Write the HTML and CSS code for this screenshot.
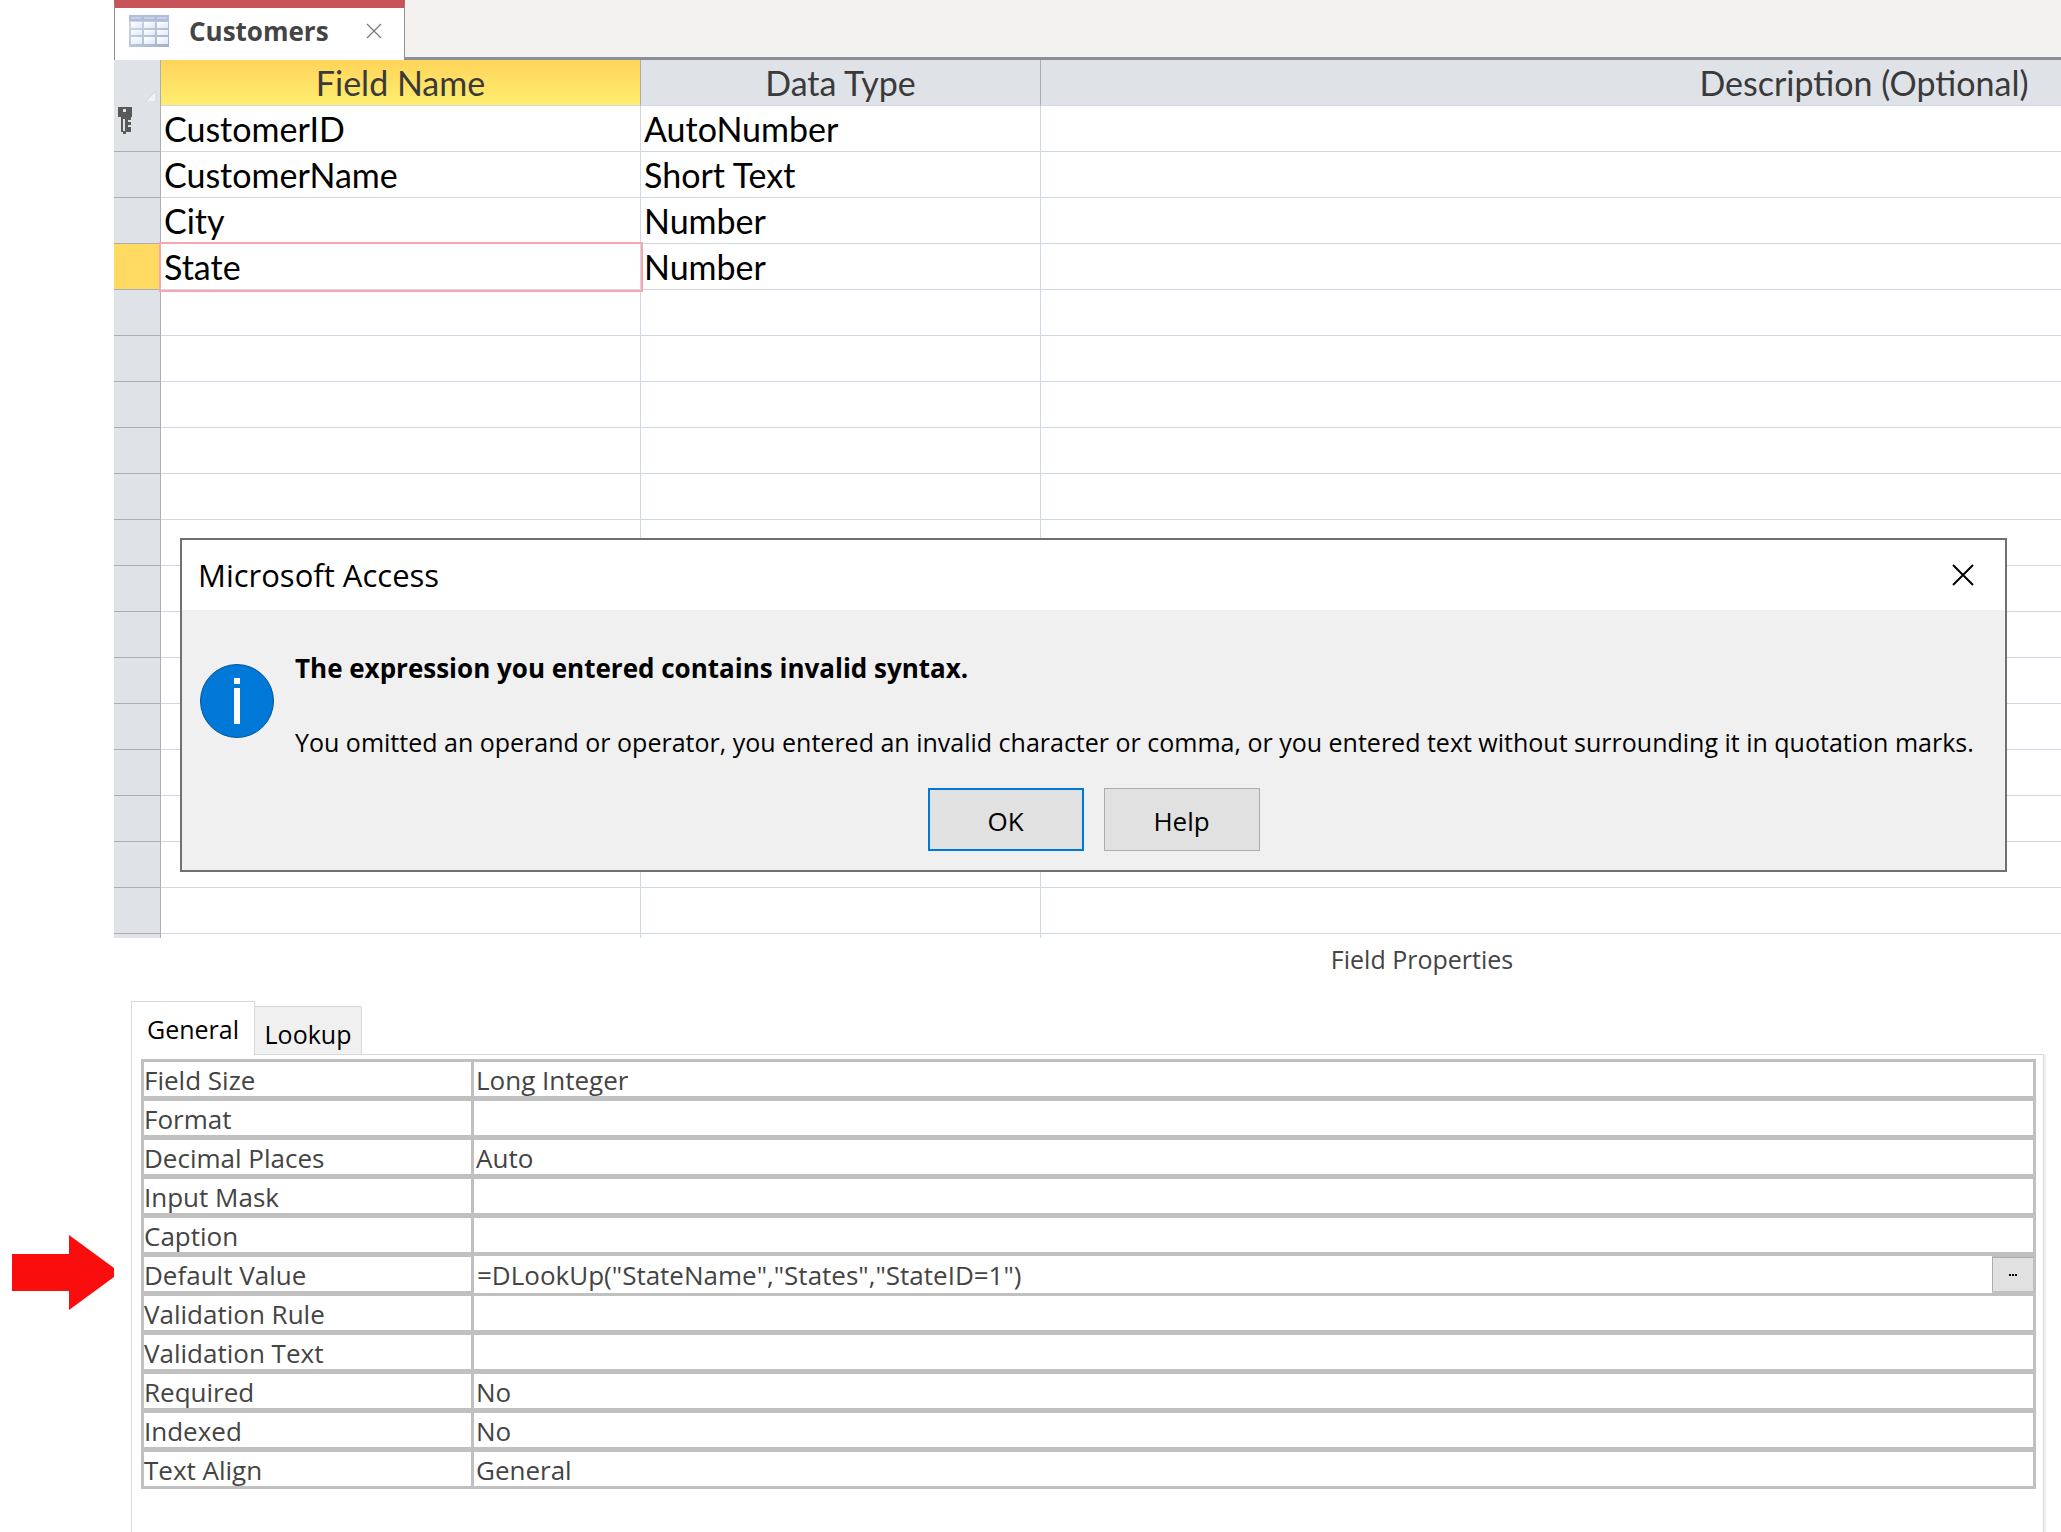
FILE: index.html
```html
<!DOCTYPE html>
<html lang="en">
<head>
<meta charset="utf-8">
<title>Customers</title>
<link rel="stylesheet" href="styles.css">
</head>
<body>
<div class="app">
  <header class="doc-tabs">
    <div class="doc-tab">
      <svg class="table-icon" width="40" height="32" viewBox="0 0 40 32" aria-hidden="true">
        <defs>
          <linearGradient id="sheet" x1="0" y1="0" x2="1" y2="1">
            <stop offset="0" stop-color="#d3dbec"/>
            <stop offset="1" stop-color="#a3b0c8"/>
          </linearGradient>
          <linearGradient id="cell" x1="0" y1="0" x2="1" y2="1">
            <stop offset="0" stop-color="#ffffff"/>
            <stop offset="1" stop-color="#dfe9fa"/>
          </linearGradient>
        </defs>
        <rect width="40" height="32" fill="url(#sheet)"/>
        <rect width="40" height="6" fill="#afbddb"/>
        <g fill="#c6d1e8"><rect x="2" y="2" width="10" height="2"/><rect x="15" y="2" width="10" height="2"/><rect x="28" y="2" width="10" height="2"/></g>
        <g fill="url(#cell)">
          <rect x="2" y="7" width="11" height="6"/><rect x="15" y="7" width="11" height="6"/><rect x="28" y="7" width="11" height="6"/>
          <rect x="2" y="15" width="11" height="5"/><rect x="15" y="15" width="11" height="5"/><rect x="28" y="15" width="11" height="5"/>
          <rect x="2" y="22" width="11" height="7"/><rect x="15" y="22" width="11" height="7"/><rect x="28" y="22" width="11" height="7"/>
        </g>
      </svg>
      <span class="doc-name">Customers</span>
      <button class="tab-close" aria-label="Close Customers">
        <svg width="16" height="16" viewBox="0 0 16 16"><path d="M1 1L15 15M15 1L1 15" stroke="#777" stroke-width="1.2"/></svg>
      </button>
    </div>
  </header>

  <main class="designer">
    <section class="grid-area">
      <table class="field-grid">
        <colgroup><col class="col-selector"><col class="col-name"><col class="col-type"><col></colgroup>
        <thead>
          <tr>
            <td class="selector corner" rowspan="2">
              <div class="corner-icons">
                <svg class="select-all" width="12" height="11" viewBox="0 0 12 11" aria-hidden="true"><path d="M0 11L11 0V11Z" fill="#eef1f6" stroke="#cdd5e0" stroke-width="1"/></svg>
                <svg class="key-icon" width="14" height="28" viewBox="0 0 14 28" aria-label="Primary key" role="img"><path fill="#595959" fill-rule="evenodd" d="M0 0H14V10H13V13H10V15H13V18H10V20H13V25H8V27H5V25H3V10H0ZM5 2V5H8V2ZM5 12V24H7V12Z"/></svg>
              </div>
            </td>
            <th class="current" scope="col">Field Name</th><th scope="col">Data Type</th><th scope="col">Description (Optional)</th>
          </tr>
          <tr class="field-row"><td>CustomerID</td><td>AutoNumber</td><td></td></tr>
        </thead>
        <tbody>
          <tr><td class="selector"></td><td>CustomerName</td><td>Short Text</td><td></td></tr>
          <tr><td class="selector"></td><td>City</td><td>Number</td><td></td></tr>
          <tr><td class="selector active"></td><td class="focused">State</td><td>Number</td><td></td></tr>
          <tr><td class="selector"></td><td></td><td></td><td></td></tr>
          <tr><td class="selector"></td><td></td><td></td><td></td></tr>
          <tr><td class="selector"></td><td></td><td></td><td></td></tr>
          <tr><td class="selector"></td><td></td><td></td><td></td></tr>
          <tr><td class="selector"></td><td></td><td></td><td></td></tr>
          <tr><td class="selector"></td><td></td><td></td><td></td></tr>
          <tr><td class="selector"></td><td></td><td></td><td></td></tr>
          <tr><td class="selector"></td><td></td><td></td><td></td></tr>
          <tr><td class="selector"></td><td></td><td></td><td></td></tr>
          <tr><td class="selector"></td><td></td><td></td><td></td></tr>
          <tr><td class="selector"></td><td></td><td></td><td></td></tr>
          <tr><td class="selector"></td><td></td><td></td><td></td></tr>
          <tr><td class="selector"></td><td></td><td></td><td></td></tr>
          <tr><td class="selector"></td><td></td><td></td><td></td></tr>
          <tr class="cut-row"><td class="selector"></td><td></td><td></td><td></td></tr>
        </tbody>
      </table>

      <div class="dialog" role="alertdialog" aria-labelledby="dialog-title">
        <div class="dialog-title">
          <span id="dialog-title">Microsoft Access</span>
          <button class="dialog-close" aria-label="Close">
            <svg width="22" height="22" viewBox="0 0 22 22"><path d="M1 1L21 21M21 1L1 21" stroke="#000" stroke-width="2"/></svg>
          </button>
        </div>
        <div class="dialog-body">
          <div class="message">
            <svg class="info-icon" width="74" height="74" viewBox="0 0 74 74" aria-hidden="true"><circle cx="37" cy="37" r="36.5" fill="#0078d7" stroke="#00559b"/><path d="M34 14H40V20H34ZM34 24H40V60H34Z" fill="#fff"/></svg>
            <div class="message-text">
              <strong>The expression you entered contains invalid syntax.</strong>
              <p>You omitted an operand or operator, you entered an invalid character or comma, or you entered text without surrounding it in quotation marks.</p>
            </div>
          </div>
          <div class="dialog-actions">
            <button class="btn primary">OK</button>
            <button class="btn">Help</button>
          </div>
        </div>
      </div>
    </section>

    <section class="properties">
      <h2 class="properties-title">Field Properties</h2>
      <div class="property-tabs" role="tablist">
        <button class="property-tab selected" role="tab" aria-selected="true">General</button>
        <button class="property-tab" role="tab" aria-selected="false">Lookup</button>
        <span class="tab-rule"></span>
      </div>
      <div class="property-panel">
        <table class="property-grid">
          <colgroup><col class="col-label"><col></colgroup>
          <tbody>
            <tr><th scope="row"><label for="p1">Field Size</label></th><td><input id="p1" value="Long Integer"></td></tr>
            <tr><th scope="row"><label for="p2">Format</label></th><td><input id="p2"></td></tr>
            <tr><th scope="row"><label for="p3">Decimal Places</label></th><td><input id="p3" value="Auto"></td></tr>
            <tr><th scope="row"><label for="p4">Input Mask</label></th><td><input id="p4"></td></tr>
            <tr><th scope="row"><label for="p5">Caption</label></th><td><input id="p5"></td></tr>
            <tr><th scope="row"><label for="p6">Default Value</label></th><td><div class="editing"><input id="p6" value='=DLookUp("StateName","States","StateID=1")'><button class="builder" aria-label="Expression builder"><svg width="8" height="2" viewBox="0 0 8 2"><path d="M0 0h2v2H0zM3 0h2v2H3zM6 0h2v2H6z"/></svg></button></div></td></tr>
            <tr><th scope="row"><label for="p7">Validation Rule</label></th><td><input id="p7"></td></tr>
            <tr><th scope="row"><label for="p8">Validation Text</label></th><td><input id="p8"></td></tr>
            <tr><th scope="row"><label for="p9">Required</label></th><td><input id="p9" value="No"></td></tr>
            <tr><th scope="row"><label for="p10">Indexed</label></th><td><input id="p10" value="No"></td></tr>
            <tr><th scope="row"><label for="p11">Text Align</label></th><td><input id="p11" value="General"></td></tr>
          </tbody>
        </table>
      </div>
      <svg class="pointer" width="102" height="76" viewBox="0 0 102 76" aria-hidden="true"><path d="M0 19H57V0L102 33V42L57 75V56H0Z" fill="#f90d0d"/></svg>
    </section>
  </main>
</div>
</body>
</html>
```
FILE: styles.css
```css
* { box-sizing: border-box; }

body {
  margin: 0;
  background: #fff;
  color: #444;
  font-family: "Open Sans", "Noto Sans", sans-serif;
  font-size: 26px;
}

button, input {
  font: inherit;
  color: inherit;
  border: 0;
  padding: 0;
  margin: 0;
  background: none;
  border-radius: 0;
}

svg { display: block; }

.app {
  display: flex;
  flex-direction: column;
  min-height: 100vh;
  padding-left: 114px;
  overflow: hidden;
}

/* Document tabs */
.doc-tabs {
  display: flex;
  height: 60px;
  background: #f3f2f1;
  box-shadow: inset 0 -3px #8a9096;
}

.doc-tab {
  display: flex;
  align-items: center;
  width: 291px;
  padding: 0 22px 6px 14px;
  background: #fff;
  border: 1px solid #8a9096;
  border-top: 8px solid #c75558;
  border-bottom: 0;
}

.doc-name {
  margin-left: 20px;
  font-weight: 700;
}

.tab-close { margin-left: auto; }

/* Field list */
.designer {
  display: flex;
  flex-direction: column;
  flex: 1;
}

.grid-area { position: relative; }

.field-grid {
  width: calc(100% + 627px);
  table-layout: fixed;
  border-spacing: 0;
  font-family: Lato, "Open Sans", sans-serif;
  font-size: 34px;
  color: #000;
}

.col-selector { width: 47px; }
.col-name { width: 480px; }
.col-type { width: 400px; }

.field-grid th,
.field-grid td {
  height: 46px;
  padding: 1px 3px 0;
  border-right: 1px solid #d0d7e5;
  border-bottom: 1px solid #d0d7e5;
  line-height: 42px;
}

.field-grid th {
  background: #dfe2e7;
  border-right-color: #a9adb5;
  color: #3a3a3a;
  font-weight: 400;
}

.field-grid .current {
  background: linear-gradient(#ffd45a, #ffee70);
}

.field-grid .selector {
  padding: 0;
  background: #dfe2e7;
  border-color: #abaeb4;
}

.field-grid .corner { vertical-align: top; }

.corner-icons {
  display: flex;
  flex-direction: column;
  gap: 5px;
  padding: 31px 3px 0 4px;
}

.select-all { align-self: flex-end; }

.field-grid .active { background: #ffda62; }

.field-grid .focused { outline: 2px solid #f8a6ab; }

.field-grid .cut-row td {
  height: 4px;
  padding: 0;
  border-bottom: 0;
  line-height: 0;
}

/* Message box */
.dialog {
  position: absolute;
  top: 478px;
  left: 66px;
  right: 54px;
  background: #f0f0f0;
  border: 2px solid #707070;
  color: #000;
}

.dialog-title {
  display: flex;
  align-items: center;
  justify-content: space-between;
  height: 70px;
  padding: 0 31px 0 16px;
  background: #fff;
  font-size: 31px;
}

.dialog-body { padding: 40px 18px 19px; }

.message {
  display: flex;
  gap: 21px;
}

.info-icon {
  flex: none;
  margin-top: 14px;
}

.message-text {
  line-height: 37px;
  white-space: nowrap;
}

.message-text p {
  margin: 37px 0 0;
  font-size: 25px;
}

.dialog-actions {
  display: flex;
  justify-content: center;
  gap: 20px;
  margin-top: 27px;
}

.btn {
  width: 156px;
  height: 63px;
  padding-top: 2px;
  background: #e1e1e1;
  border: 1px solid #adadad;
}

.btn.primary { border: 2px solid #0078d7; }

/* Field properties */
.properties {
  position: relative;
  display: flex;
  flex-direction: column;
  flex: 1;
}

.properties-title {
  width: calc(100% + 669px);
  margin: 0;
  padding: 3px 0 23px;
  font-size: 25px;
  font-weight: 400;
  line-height: 37px;
  text-align: center;
}

.property-tabs {
  display: flex;
  align-items: flex-end;
  margin: 0 17px;
  font-size: 25px;
}

.property-tab {
  width: 107px;
  height: 49px;
  padding-top: 7px;
  background: #f0f0f0;
  border: 1px solid #d9d9d9;
  border-left: 0;
  color: #000;
}

.property-tab.selected {
  width: 124px;
  height: 54px;
  padding: 0;
  background: #fff;
  border-left: 1px solid #d9d9d9;
  border-bottom: 0;
}

.tab-rule {
  flex: 1;
  border-bottom: 1px solid #d9d9d9;
}

.property-panel {
  flex: 1;
  margin: 0 17px;
  padding: 4px 7px 0 9px;
  border: solid #d9d9d9;
  border-width: 0 1px;
  box-shadow: 2px 0 #f0f0f0;
}

.property-grid {
  width: 100%;
  table-layout: fixed;
  border: 3px solid #c0c0c0;
  border-bottom: 0;
  border-spacing: 0;
}

.col-label { width: 330px; }

.property-grid th,
.property-grid td {
  height: 39px;
  padding: 0;
  border-bottom: 5px solid #c0c0c0;
  font-weight: 400;
  line-height: 34px;
  text-align: left;
}

.property-grid th { border-right: 3px solid #c0c0c0; }

.property-grid tr:last-child > * {
  height: 37px;
  border-bottom-width: 3px;
}

.property-grid label,
.property-grid input {
  display: block;
  width: 100%;
  height: 34px;
  padding-top: 2px;
  line-height: 32px;
}

.property-grid input { padding-left: 2px; }

.editing {
  display: flex;
  background: #fff;
}

.property-grid .editing input {
  flex: 1;
  padding-left: 3px;
  background: #fff;
  box-shadow: 0 -1px #fff, 0 2px #fff;
}

.builder {
  display: grid;
  place-items: center;
  width: 41px;
  height: 34px;
  background: #e1e1e1;
  border: solid #adadad;
  border-width: 1px 0 0 1px;
}

/* Arrow that calls out the Default Value row */
.pointer {
  position: absolute;
  left: -102px;
  top: 297px;
}
```
